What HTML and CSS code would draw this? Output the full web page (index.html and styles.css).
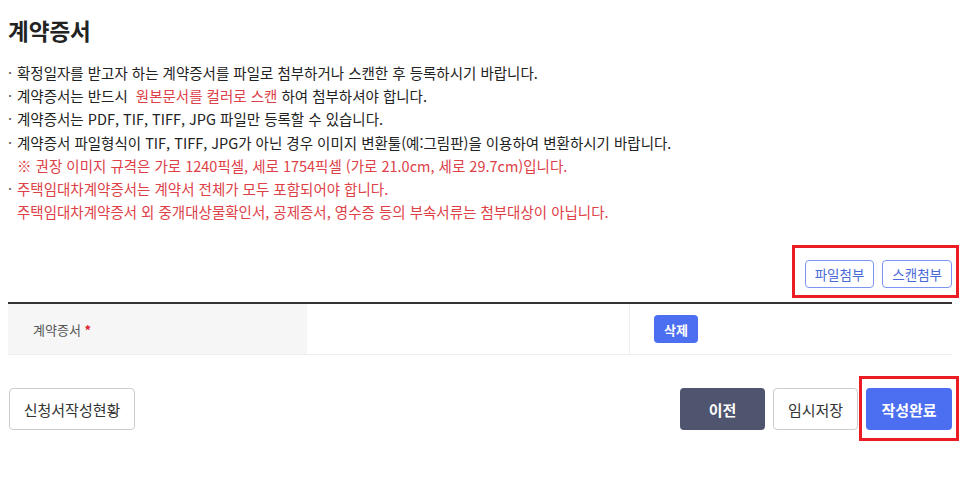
FILE: index.html
```html
<!DOCTYPE html>
<html lang="ko">

<head>
    <meta charset="UTF-8">
    <meta name="viewport" content="width=device-width, initial-scale=1.0">
    <title>계약증서</title>
    <link rel="stylesheet" href="styles.css">
</head>

<body>
    <div class="container">
        <h2 class="page-title">계약증서</h2>
        <ul class="guide-list">
            <li>확정일자를 받고자 하는 계약증서를 파일로 첨부하거나 스캔한 후 등록하시기 바랍니다.</li>
            <li>계약증서는 반드시 <span class="text-red">원본문서를 컬러로 스캔</span> 하여 첨부하셔야 합니다.</li>
            <li>계약증서는 PDF, TIF, TIFF, JPG 파일만 등록할 수 있습니다.</li>
            <li>계약증서 파일형식이 TIF, TIFF, JPG가 아닌 경우 이미지 변환툴(예:그림판)을 이용하여 변환하시기 바랍니다.</li>
            <li class="no-dot text-red">※ 권장 이미지 규격은 가로 1240픽셀, 세로 1754픽셀 (가로 21.0cm, 세로 29.7cm)입니다.</li>
            <li class="text-red">주택임대차계약증서는 계약서 전체가 모두 포함되어야 합니다.</li>
            <li class="no-dot text-red">주택임대차계약증서 외 중개대상물확인서, 공제증서, 영수증 등의 부속서류는 첨부대상이 아닙니다.</li>
        </ul>

        <div class="attach-row">
            <div class="mark-box mark-attach">
                <button type="button" class="btn-line">파일첨부</button>
                <button type="button" class="btn-line">스캔첨부</button>
            </div>
        </div>

        <table class="file-table">
            <tbody>
                <tr>
                    <th>계약증서 <span class="required">*</span></th>
                    <td class="file-name"></td>
                    <td class="file-action"><button type="button" class="btn-small">삭제</button></td>
                </tr>
            </tbody>
        </table>

        <div class="footer-buttons">
            <button type="button" class="btn btn-white btn-status">신청서작성현황</button>
            <div class="footer-right">
                <button type="button" class="btn btn-dark">이전</button>
                <button type="button" class="btn btn-white">임시저장</button>
                <div class="mark-box mark-submit">
                    <button type="button" class="btn btn-blue">작성완료</button>
                </div>
            </div>
        </div>
    </div>
</body>

</html>
```

FILE: styles.css
```css
body {
    margin: 0;
    font-family: "Noto Sans CJK KR", "Noto Sans", sans-serif;
    color: #222;
    background-color: #fff;
}

.container {
    width: 944px;
    margin-left: 8px;
}

.page-title {
    margin: 0;
    padding-top: 14px;
    font-size: 22.5px;
    line-height: 32px;
    font-weight: bold;
    color: #222;
}

.guide-list {
    list-style: none;
    margin: 15px 0 0;
    padding: 0;
    font-size: 14.5px;
    line-height: 23.2px;
    color: #222;
}

.guide-list li {
    position: relative;
    padding-left: 9px;
}

.guide-list li::before {
    content: "·";
    position: absolute;
    left: 0;
    color: #555;
}

.guide-list li.no-dot::before {
    content: "";
}

.text-red {
    color: #dd4147;
}

.guide-list .text-red {
    padding-left: 4px;
}

.guide-list li.text-red {
    padding-left: 9px;
}

.attach-row {
    display: flex;
    justify-content: flex-end;
    margin-top: 22px;
}

.mark-box {
    display: flex;
    border: 3px solid #ec1c24;
}

.mark-attach {
    gap: 8px;
    padding: 12px 4px 7px 10px;
    margin-right: -7px;
}

.btn-line {
    height: 28px;
    padding: 0 9px;
    border: 1px solid #7b96f2;
    border-radius: 4px;
    background-color: #fff;
    color: #4a6ad8;
    font-family: inherit;
    font-size: 13.5px;
    cursor: pointer;
}

.file-table {
    width: 100%;
    margin-top: 4px;
    border-collapse: collapse;
    border-top: 2px solid #333;
}

.file-table th,
.file-table td {
    height: 50px;
    padding: 0;
    border-bottom: 1px solid #eee;
    font-size: 13px;
    text-align: left;
}

.file-table th {
    width: 299px;
    padding-left: 25px;
    box-sizing: border-box;
    background-color: #f6f6f6;
    font-weight: normal;
    color: #555;
}

.required {
    color: #e0202a;
    font-weight: bold;
}

.file-table .file-name {
    width: 322px;
}

.file-table .file-action {
    padding-left: 24px;
    border-left: 1px solid #eee;
}

.btn-small {
    height: 28px;
    padding: 0 10px;
    border: none;
    border-radius: 4px;
    background-color: #4c6ef0;
    color: #fff;
    font-family: inherit;
    font-size: 13px;
    font-weight: bold;
    cursor: pointer;
}

.footer-buttons {
    display: flex;
    justify-content: space-between;
    align-items: flex-start;
    margin-top: 33px;
    padding-left: 1px;
}

.footer-right {
    display: flex;
    align-items: flex-start;
    gap: 8px;
}

.btn {
    height: 42px;
    padding: 0 12px;
    border-radius: 4px;
    font-family: inherit;
    font-size: 15px;
    cursor: pointer;
}

.btn-white {
    border: 1px solid #ccc;
    background-color: #fff;
    color: #333;
}

.btn-status {
    width: 126px;
}

.btn-dark {
    width: 85px;
    border: none;
    background-color: #4f556e;
    color: #fff;
    font-weight: bold;
}

.footer-right .btn-white {
    width: 85px;
}

.btn-blue {
    width: 86px;
    border: none;
    background-color: #4c6ef0;
    color: #fff;
    font-weight: bold;
}

.mark-submit {
    padding: 9px 4px 8px 4px;
    margin: -12px -7px 0 -7px;
}
```
